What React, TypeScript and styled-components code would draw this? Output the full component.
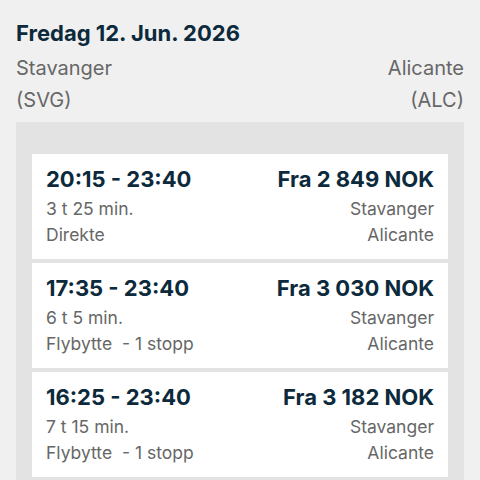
import React from "react";
import styled, { createGlobalStyle } from "styled-components";

const Global = createGlobalStyle`
  html, body { margin: 0; padding: 0; background: #f0f0f0; }
  body { font-family: Inter, "Noto Sans", sans-serif; -webkit-font-smoothing: antialiased; }
`;

const Page = styled.div`
  padding: 17px 16px 0;
`;

const Title = styled.h1`
  margin: 0;
  font-size: 22px;
  line-height: 32px;
  font-weight: 700;
  color: #0c2a3b;
`;

const Route = styled.div`
  display: flex;
  justify-content: space-between;
  margin-top: 3px;
`;

const Place = styled.div<{ $right?: boolean }>`
  display: flex;
  flex-direction: column;
  align-items: ${(p) => (p.$right ? "flex-end" : "flex-start")};
  font-size: 20px;
  line-height: 32px;
  color: #676767;
`;

const Panel = styled.div`
  margin-top: 6px;
  background: #e3e3e3;
  padding: 32px 16px 16px;
  display: flex;
  flex-direction: column;
  gap: 4px;
`;

const Card = styled.div`
  background: #fff;
  padding: 10px 14px 11px;
  display: grid;
  grid-template-columns: 1fr auto;
`;

const Strong = styled.div<{ $right?: boolean }>`
  font-size: 22px;
  line-height: 30px;
  margin-bottom: 2px;
  font-weight: 700;
  color: #0c2a3b;
  text-align: ${(p) => (p.$right ? "right" : "left")};
`;

const Sub = styled.div<{ $right?: boolean }>`
  font-size: 17.5px;
  line-height: 26px;
  color: #676767;
  text-align: ${(p) => (p.$right ? "right" : "left")};
  white-space: pre;
`;

const flights = [
  { time: "20:15 - 23:40", price: "Fra 2 849 NOK", dur: "3 t 25 min.", stops: "Direkte" },
  { time: "17:35 - 23:40", price: "Fra 3 030 NOK", dur: "6 t 5 min.", stops: "Flybytte  - 1 stopp" },
  { time: "16:25 - 23:40", price: "Fra 3 182 NOK", dur: "7 t 15 min.", stops: "Flybytte  - 1 stopp" },
];

export default function App() {
  return (
    <>
      <Global />
      <Page>
        <Title>Fredag 12. Jun. 2026</Title>
        <Route>
          <Place>
            <span>Stavanger</span>
            <span>(SVG)</span>
          </Place>
          <Place $right>
            <span>Alicante</span>
            <span>(ALC)</span>
          </Place>
        </Route>
        <Panel>
          {flights.map((f) => (
            <Card key={f.time}>
              <Strong>{f.time}</Strong>
              <Strong $right>{f.price}</Strong>
              <Sub>{f.dur}</Sub>
              <Sub $right>Stavanger</Sub>
              <Sub>{f.stops}</Sub>
              <Sub $right>Alicante</Sub>
            </Card>
          ))}
        </Panel>
      </Page>
    </>
  );
}
